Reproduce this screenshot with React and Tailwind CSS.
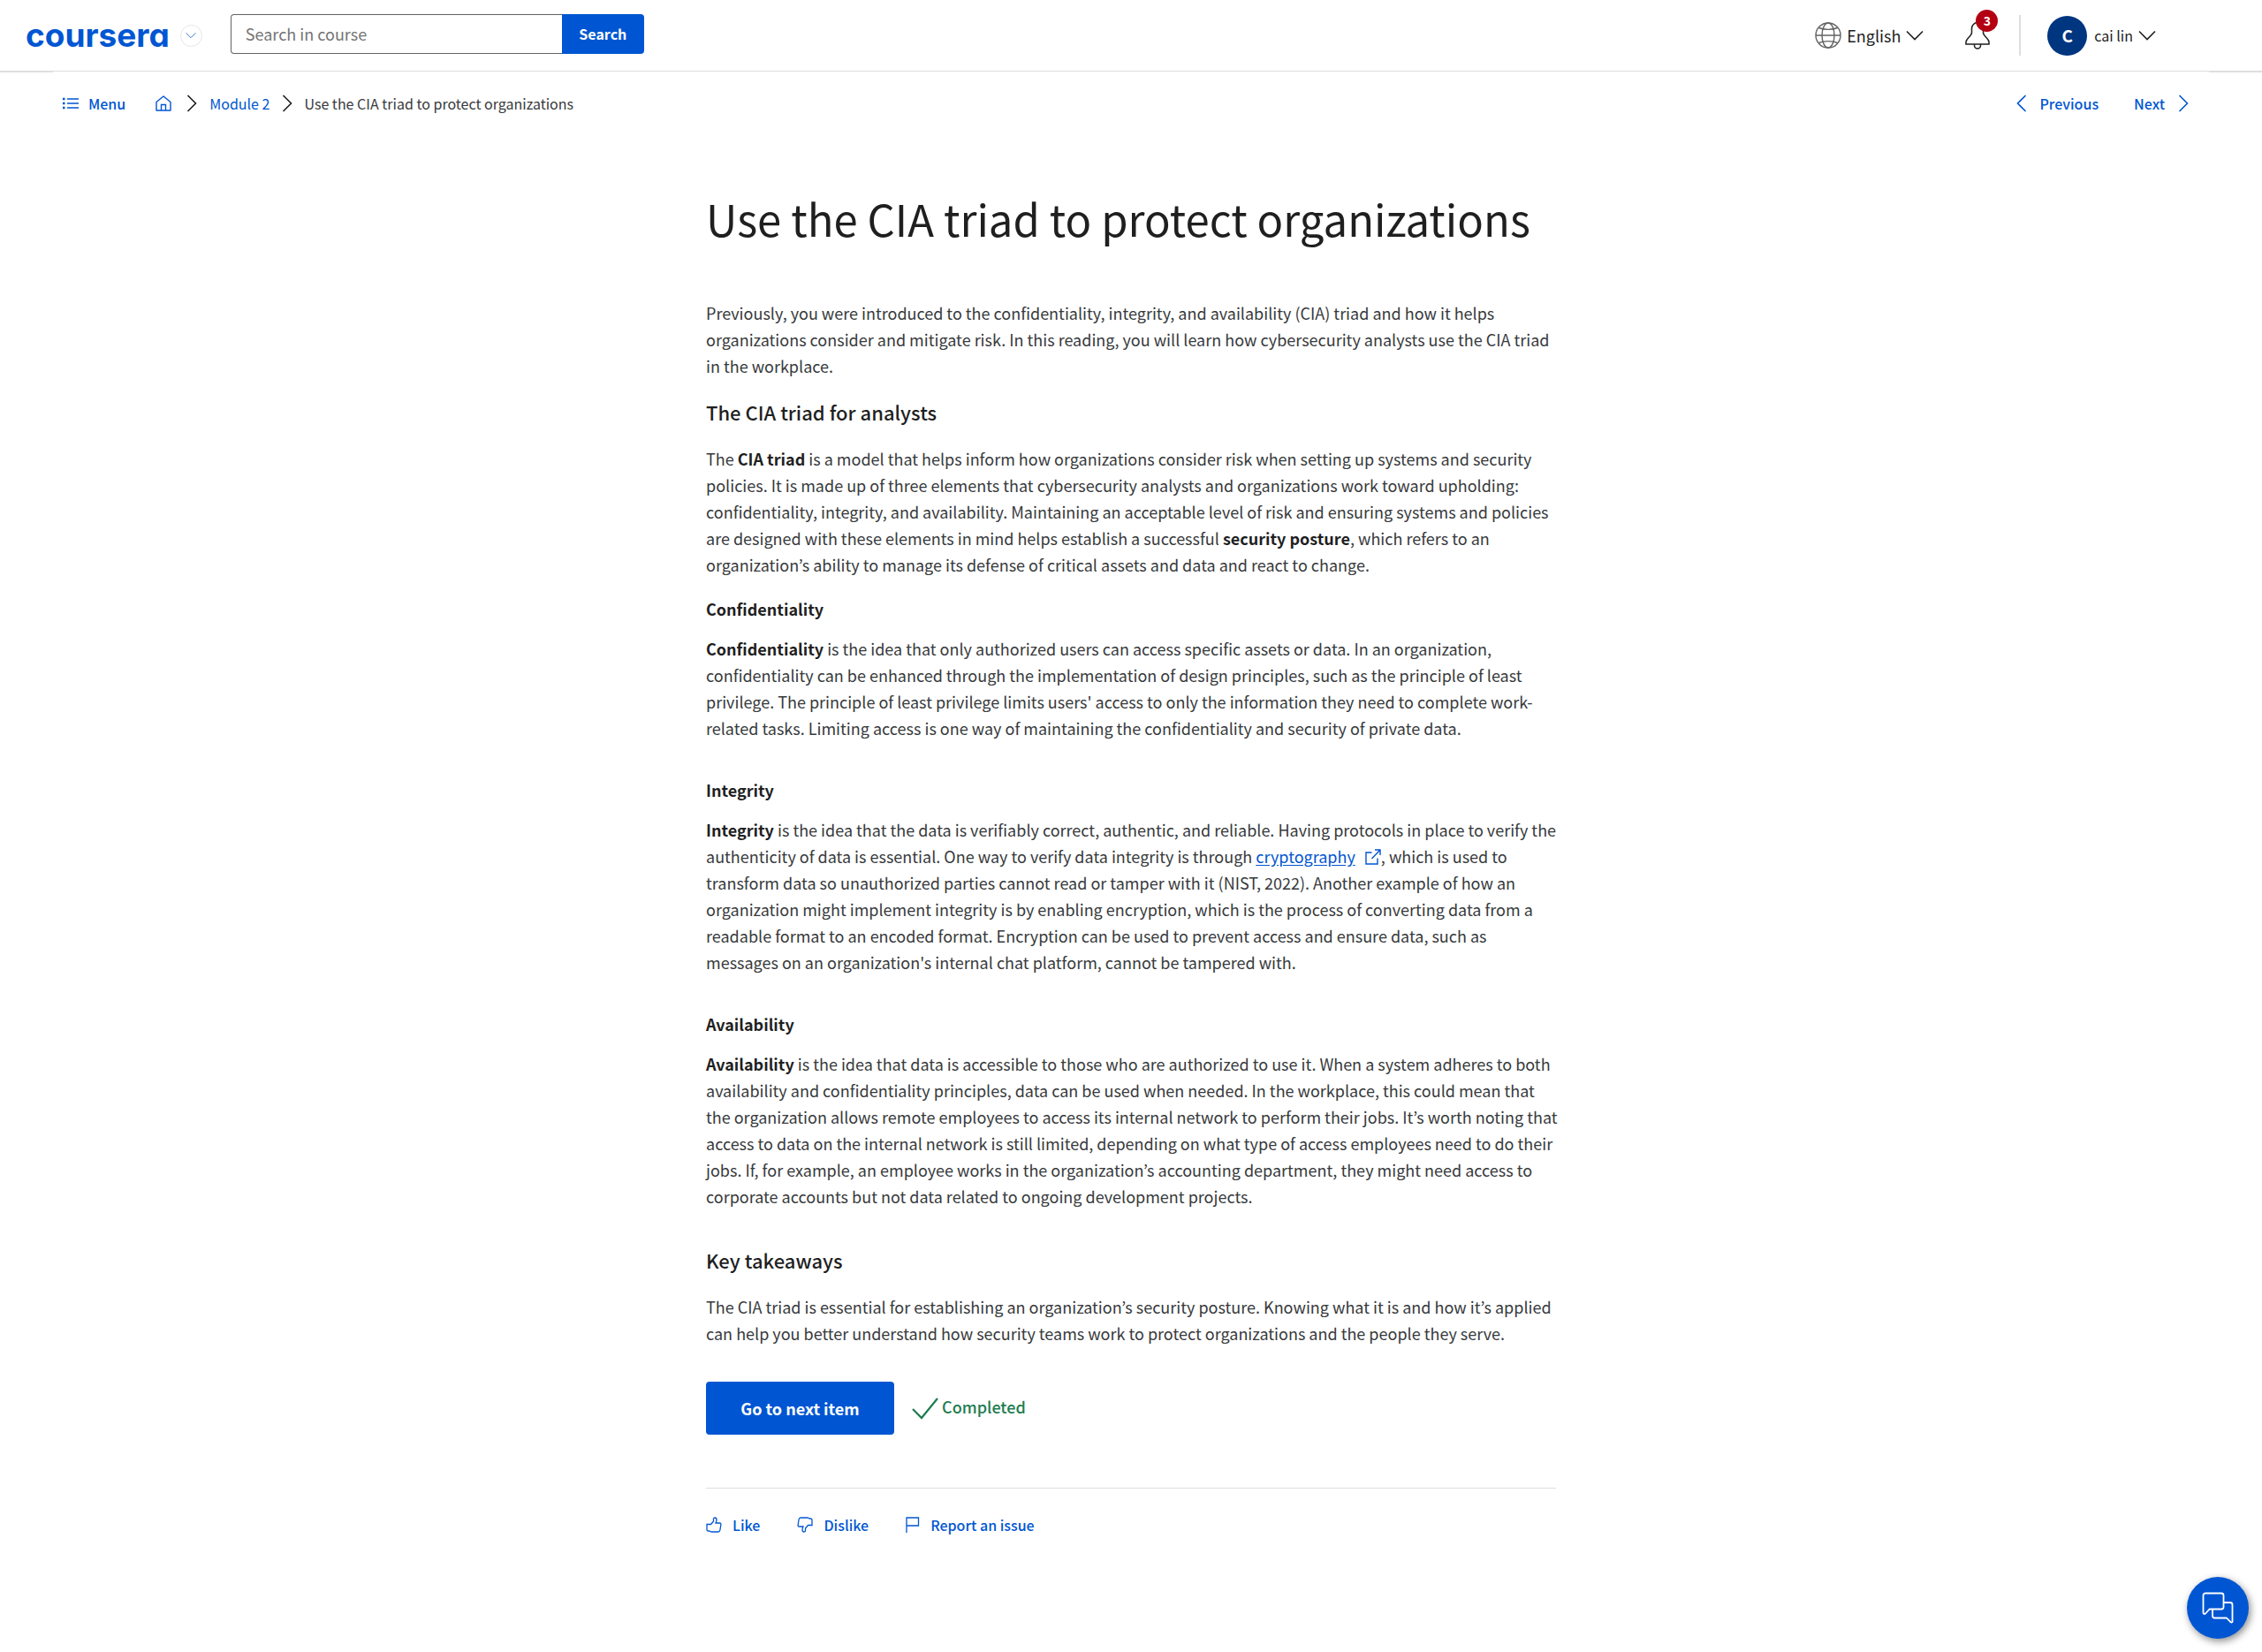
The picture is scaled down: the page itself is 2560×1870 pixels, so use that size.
import React from "react";

function Chevron({ dir, className }) {
  const d = {
    down: "M1 5.5l9 9 9-9",
    right: "M5.5 1l9 9-9 9",
    left: "M14.5 1l-9 9 9 9",
  }[dir];
  return (
    <svg viewBox="0 0 20 20" fill="none" stroke="currentColor" strokeWidth="1.6" className={className} aria-hidden="true">
      <path d={d} />
    </svg>
  );
}

function GlobeIcon() {
  return (
    <svg viewBox="0 0 30 30" fill="none" stroke="#636363" strokeWidth="1.4" className="size-[30px]" aria-hidden="true">
      <circle cx="15" cy="15" r="14" />
      <ellipse cx="15" cy="15" rx="7" ry="14" />
      <path d="M1 15h28M4.500 6.500c6 2.500 15 2.500 21 0M4.500 23.500c6-2.500 15-2.500 21 0" />
    </svg>
  );
}

function BellIcon() {
  return (
    <svg viewBox="0 0 28 32" fill="none" stroke="#1f1f1f" strokeWidth="1.5" className="h-8 w-7" aria-hidden="true">
      <path d="M7.500 13V8.500C7.500 4.500 10.500 1.500 14 1.500s6.500 3 6.500 7V13c0 4 6.500 6.500 6.500 10.500V26H1v-2.500C1 19.500 7.500 17 7.500 13z" />
      <path d="M10.500 26v1.500a3.500 3.500 0 0 0 7 0V26" />
    </svg>
  );
}

function MenuIcon() {
  return (
    <svg viewBox="0 0 20 16" fill="none" stroke="currentColor" className="h-4 w-5" aria-hidden="true">
      <path d="M6 3h13M6 8h13M6 13h13" strokeWidth="1.5" />
      <path d="M1 3h2.500M1 8h2.500M1 13h2.500" strokeWidth="2.500" />
    </svg>
  );
}

function HomeIcon() {
  return (
    <svg viewBox="0 0 18 18" fill="none" stroke="currentColor" strokeWidth="1.400" className="size-[18px]" aria-hidden="true">
      <path d="M1 7.500L9 1l8 6.500V17H1z" strokeLinejoin="round" />
      <path d="M6.500 17v-6.500h5V17" />
    </svg>
  );
}

function ExternalIcon() {
  return (
    <svg viewBox="0 0 18 18" fill="none" stroke="currentColor" strokeWidth="1.400" className="ml-[11px] inline size-[18px] align-[-2px]" aria-hidden="true">
      <path d="M7.500 4H1v13h13v-6.500" />
      <path d="M11 1h6v6M17 1L7.500 11" />
    </svg>
  );
}

const thumb =
  "M1 8.500h4.500L8.500 5V2.500C8.500 1.500 9 1 10 1s2 .8 2 2.200C12 5 11.300 6 11 7h4.500c1 0 1.500.7 1.400 1.600l-1 6.400c-.2 1.200-1 2-2.200 2H6.200C5 17 4.500 16 3.500 16H2.400C1.600 16 1 15.400 1 14.500z";

function LikeIcon() {
  return (
    <svg viewBox="0 0 18 18" fill="none" stroke="currentColor" strokeWidth="1.300" className="size-[18px]" aria-hidden="true">
      <path d={thumb} />
    </svg>
  );
}

function DislikeIcon() {
  return (
    <svg viewBox="0 0 18 18" fill="none" stroke="currentColor" strokeWidth="1.300" className="size-[18px]" aria-hidden="true">
      <path d={thumb} transform="rotate(180 9 9)" />
    </svg>
  );
}

function FlagIcon() {
  return (
    <svg viewBox="0 0 16 18" fill="none" stroke="currentColor" strokeWidth="1.300" className="h-[18px] w-4" aria-hidden="true">
      <path d="M1 18V1h13.500v9H1" />
    </svg>
  );
}

function CheckIcon() {
  return (
    <svg viewBox="0 0 30 25" fill="none" stroke="currentColor" strokeWidth="2.200" className="h-[25px] w-[30px]" aria-hidden="true">
      <path d="M1 13l10 10L29 1" />
    </svg>
  );
}

function ChatIcon() {
  return (
    <svg viewBox="0 0 36 36" fill="none" stroke="currentColor" strokeWidth="1.800" strokeLinejoin="round" className="size-9" aria-hidden="true">
      <path d="M4 1.500h18a2.500 2.500 0 0 1 2.500 2.500v13a2.500 2.500 0 0 1-2.500 2.500H8.500L4 24.500c-1 .8-2.500.5-2.500-1V4A2.500 2.500 0 0 1 4 1.500z" />
      <path d="M24.500 12H32a2.500 2.500 0 0 1 2.500 2.500v19c0 1-1.200 1.500-2 .7L28 29.500H14.500A2.500 2.500 0 0 1 12 27v-7.500" />
    </svg>
  );
}

function Header() {
  return (
    <header className="flex h-[81px] items-center border-b border-[#dedede] pl-[29px] pr-[120px]">
      <a href="#home" className="text-[37px] leading-[46px] font-bold text-[#0056d2] font-['Inter',sans-serif] [font-feature-settings:'cv11']">
        coursera
      </a>
      <button aria-label="Explore" className="ml-3 flex size-[25px] items-center justify-center rounded-full border border-[#e5e7e8] text-[#2a73cc]">
        <Chevron dir="down" className="size-3" />
      </button>
      <form className="mb-1 ml-8 flex h-[45px]">
        <input
          type="text"
          aria-label="Search in course"
          placeholder="Search in course"
          className="w-[375px] rounded-l-[4px] border border-[#636363] border-r-0 px-4 text-[18px] placeholder:text-[#757575]"
        />
        <button type="button" className="w-[93px] rounded-r-[4px] bg-[#0056d2] pb-px text-[16px] font-bold text-white">
          Search
        </button>
      </form>
      <div className="ml-auto flex items-center text-[#1f1f1f]">
        <button className="flex items-center text-[18px]">
          <GlobeIcon />
          <span className="ml-[6px]">English</span>
          <Chevron dir="down" className="ml-[6px] size-5" />
        </button>
        <button aria-label="Notifications" className="relative ml-[47px]">
          <BellIcon />
          <span className="absolute -top-[13px] left-3 flex size-[25px] items-center justify-center rounded-full bg-[#b30012] text-[14px] font-bold text-white">
            3
          </span>
        </button>
        <div className="ml-[33px] h-[46px] w-[2px] bg-[#dedede]" />
        <button className="ml-[30px] flex items-center text-[16px]">
          <span className="flex size-[45px] items-center justify-center rounded-full bg-[#003580] text-[19px] font-bold text-white">C</span>
          <span className="ml-2">cai lin</span>
          <Chevron dir="down" className="ml-[6px] size-5" />
        </button>
      </div>
    </header>
  );
}

function CourseNav() {
  return (
    <>
      <div className="flex h-px justify-between">
        <div className="w-[60px] bg-[#dedede]" />
        <div className="w-[60px] bg-[#dedede]" />
      </div>
      <nav aria-label="Course" className="flex h-[70px] items-center pl-[70px] pr-[79px] text-[16px] text-[#0056d2]">
        <button className="flex items-center font-medium">
          <MenuIcon />
          <span className="ml-[10px]">Menu</span>
        </button>
        <a href="#course" aria-label="Course home" className="ml-[34px]">
          <HomeIcon />
        </a>
        <Chevron dir="right" className="ml-[13px] size-5 text-[#1f1f1f]" />
        <a href="#module-2" className="ml-[10px]">Module 2</a>
        <Chevron dir="right" className="ml-[10px] size-5 text-[#1f1f1f]" />
        <span className="ml-[9px] text-[#373a3c]">Use the CIA triad to protect organizations</span>
        <a href="#previous" className="ml-auto flex items-center font-medium">
          <Chevron dir="left" className="size-5" />
          <span className="ml-[11px]">Previous</span>
        </a>
        <a href="#next" className="ml-10 flex items-center font-medium">
          <span className="mr-[11px]">Next</span>
          <Chevron dir="right" className="size-5" />
        </a>
      </nav>
    </>
  );
}

function Strong({ children }) {
  return <strong className="font-bold text-[#1f1f1f]">{children}</strong>;
}

function H2({ children }) {
  return <h2 className="text-[22px] leading-[30px] font-medium text-[#1f1f1f]">{children}</h2>;
}

function H3({ children }) {
  return <h3 className="text-[18px] leading-[30px] font-bold text-[#1f1f1f]">{children}</h3>;
}

export default function App() {
  return (
    <div className="min-h-screen bg-white font-['Noto_Sans_CJK_KR',sans-serif]">
      <Header />
      <CourseNav />
      <main className="mx-auto max-w-[962px] pt-[60px] text-[18px] leading-[30px] text-[#373a3c]">
        <h1 className="text-[49px] leading-[70px] text-[#1f1f1f]">Use the CIA triad to protect organizations</h1>
        <p className="mt-[57px] -mr-[6px] mb-[22px]">
          Previously, you were introduced to the confidentiality, integrity, and availability (CIA) triad and how it helps
          organizations consider and mitigate risk. In this reading, you will learn how cybersecurity analysts use the CIA
          triad in the workplace.
        </p>
        <H2>The CIA triad for analysts</H2>
        <p className="mt-[23px] -mr-[6px] mb-5">
          The <Strong>CIA triad</Strong> is a model that helps inform how organizations consider risk when setting up
          systems and security policies. It is made up of three elements that cybersecurity analysts and organizations
          work toward upholding: confidentiality, integrity, and availability. Maintaining an acceptable level of risk and
          ensuring systems and policies are designed with these elements in mind helps establish a successful{" "}
          <Strong>security posture</Strong>, which refers to an organization’s ability to manage its defense of critical
          assets and data and react to change.
        </p>
        <H3>Confidentiality</H3>
        <p className="mt-[15px] -mr-[6px] mb-10">
          <Strong>Confidentiality</Strong> is the idea that only authorized users can access specific assets or data. In
          an organization, confidentiality can be enhanced through the implementation of design principles, such as the
          principle of least privilege. The principle of least privilege limits users' access to only the information
          they need to complete work-related tasks. Limiting access is one way of maintaining the confidentiality and
          security of private data.
        </p>
        <H3>Integrity</H3>
        <p className="mt-[15px] -mr-[6px] mb-10">
          <Strong>Integrity</Strong> is the idea that the data is verifiably correct, authentic, and reliable. Having
          protocols in place to verify the authenticity of data is essential. One way to verify data integrity is through{" "}
          <a href="#cryptography" className="text-[#0056d2]">
            <span className="underline underline-offset-2">cryptography</span>
            <ExternalIcon />
          </a>
          , which is used to transform data so unauthorized parties cannot read or tamper with it (NIST, 2022). Another
          example of how an organization might implement integrity is by enabling encryption, which is the process of
          converting data from a readable format to an encoded format. Encryption can be used to prevent access and
          ensure data, such as messages on an organization's internal chat platform, cannot be tampered with.
        </p>
        <H3>Availability</H3>
        <p className="mt-[15px] -mr-[6px] mb-[42px]">
          <Strong>Availability</Strong> is the idea that data is accessible to those who are authorized to use it. When a
          system adheres to both availability and confidentiality principles, data can be used when needed. In the
          workplace, this could mean that the organization allows remote employees to access its internal network to
          perform their jobs. It’s worth noting that access to data on the internal network is still limited, depending
          on what type of access employees need to do their jobs. If, for example, an employee works in the
          organization’s accounting department, they might need access to corporate accounts but not data related to
          ongoing development projects.
        </p>
        <H2>Key takeaways</H2>
        <p className="mt-[23px] -mr-[6px] mb-10">
          The CIA triad is essential for establishing an organization’s security posture. Knowing what it is and how it’s
          applied can help you better understand how security teams work to protect organizations and the people they
          serve.
        </p>
        <div className="flex items-center">
          <button className="h-[60px] w-[213px] rounded-[4px] bg-[#0056d2] pb-px font-bold text-white">Go to next item</button>
          <div className="ml-5 flex items-center gap-1 font-medium text-[#1d7c50]">
            <CheckIcon />
            <span className="pb-1">Completed</span>
          </div>
        </div>
        <div className="mt-[60px] flex gap-[42px] border-t border-[#dedede] pt-[26px] text-[16px] font-medium text-[#0056d2]">
          <button className="flex items-center gap-3">
            <LikeIcon />
            Like
          </button>
          <button className="flex items-center gap-3">
            <DislikeIcon />
            Dislike
          </button>
          <button className="flex items-center gap-3">
            <FlagIcon />
            Report an issue
          </button>
        </div>
      </main>
      <button
        aria-label="Chat with us"
        className="fixed right-[15px] bottom-[15px] flex size-[70px] items-center justify-center rounded-full bg-[#0056d2] text-white shadow-[2px_3px_8px_rgba(0,0,0,0.45)]"
      >
        <ChatIcon />
      </button>
    </div>
  );
}
